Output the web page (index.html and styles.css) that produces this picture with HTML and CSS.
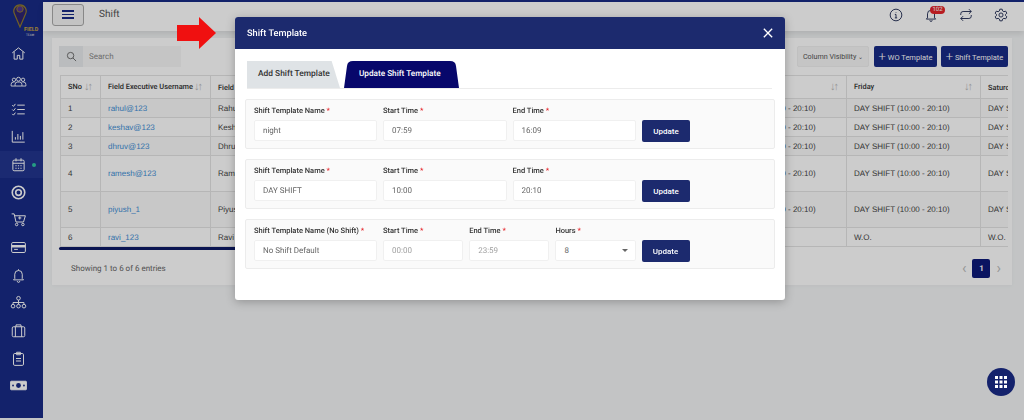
FILE: index.html
```html
<!DOCTYPE html>
<html lang="en">
<head>
    <meta charset="UTF-8">
    <meta name="viewport" content="width=device-width, initial-scale=1.0">
    <title>Shift</title>
    <link rel="stylesheet" href="styles.css">
</head>
<body>
    <div class="app">
        <aside class="sidebar">
            <div class="logo">
                <svg width="14" height="27" viewBox="0 0 14 27"><path d="M7 26 L1.500 13 A6.200 6.200 0 1 1 12.500 13 Z" fill="#2d2370" stroke="#8f7a2e" stroke-width="1.200"/><circle cx="7" cy="8" r="3.200" fill="#54358c" stroke="#8f7a2e"/></svg>
                <div class="logo-name">FIELD</div>
                <div class="logo-sub">TEAM</div>
            </div>
            <nav class="side-nav">
                <a class="side-item"><svg class="side-icon" viewBox="0 0 24 24"><path d="M2 11 12 3l10 8M5 9v12h5v-6h4v6h5V9"/></svg></a>
                <a class="side-item"><svg class="side-icon wide" viewBox="0 0 30 24"><circle cx="15" cy="8" r="3.500"/><circle cx="7" cy="9" r="3"/><circle cx="23" cy="9" r="3"/><path d="M2 20v-3a4 4 0 0 1 4-4h2M28 20v-3a4 4 0 0 0-4-4h-2M9 20v-3a4 4 0 0 1 4-4h4a4 4 0 0 1 4 4v3ZM2 20h7M21 20h7"/></svg></a>
                <a class="side-item"><svg class="side-icon" viewBox="0 0 24 24"><path d="M10 5h12M10 12h12M10 19h12M2 5l2 2 3-4M2 12l2 2 3-4M2 19l2 2 3-4"/></svg></a>
                <a class="side-item"><svg class="side-icon" viewBox="0 0 24 24"><path d="M2 3v18h20M7 17v-4M11 17V8M15 17v-6M19 17V5"/></svg></a>
                <a class="side-item active"><svg class="side-icon" viewBox="0 0 24 24"><rect x="3" y="5" width="18" height="17" rx="2"/><path d="M3 10h18M8 2v5M16 2v5M7 14h2M11 14h2M15 14h2M7 18h2M11 18h2M15 18h2"/></svg><span class="side-dot"></span></a>
                <a class="side-item"><svg class="side-icon" viewBox="0 0 24 24"><circle cx="12" cy="12" r="10" stroke-width="2.600"/><circle cx="12" cy="12" r="4.500" stroke-width="2.600"/></svg></a>
                <a class="side-item"><svg class="side-icon" viewBox="0 0 24 24"><path d="M1 3h4l3 13h12l3-10H6"/><circle cx="9" cy="20" r="2"/><circle cx="19" cy="20" r="2"/><path d="M14 7v5M11.500 9.500h5"/></svg></a>
                <a class="side-item"><svg class="side-icon" viewBox="0 0 24 24"><rect x="1" y="4" width="22" height="16" rx="2"/><path d="M1 10h22" stroke-width="4"/><path d="M5 15h6"/></svg></a>
                <a class="side-item"><svg class="side-icon" viewBox="0 0 24 24"><path d="M6 17V10a6 6 0 0 1 12 0v7l2 2H4ZM10 21a2 2 0 0 0 4 0M12 2v2"/></svg></a>
                <a class="side-item"><svg class="side-icon wide" viewBox="0 0 28 24"><circle cx="14" cy="5" r="3"/><circle cx="14" cy="18" r="3"/><circle cx="5" cy="18" r="3"/><circle cx="23" cy="18" r="3"/><path d="M14 8v7M5 15v-3h18v3"/></svg></a>
                <a class="side-item"><svg class="side-icon" viewBox="0 0 24 24"><rect x="2" y="6" width="20" height="16" rx="2"/><path d="M8 6V3h8v3M7 6v16M17 6v16"/></svg></a>
                <a class="side-item"><svg class="side-icon" viewBox="0 0 24 24"><rect x="4" y="4" width="16" height="19" rx="2"/><path d="M9 2h6v4H9ZM8 12h8M8 16h8"/></svg></a>
                <a class="side-item"><svg class="side-icon wide" viewBox="0 0 28 24"><rect x="1" y="5" width="26" height="14" rx="1" fill="#fff"/><circle cx="14" cy="12" r="4" fill="#182b86" stroke="none"/><circle cx="5" cy="12" r="1.500" fill="#182b86" stroke="none"/><circle cx="23" cy="12" r="1.500" fill="#182b86" stroke="none"/></svg></a>
            </nav>
        </aside>

        <main class="main">
            <header class="topbar">
                <button class="menu-btn"><span></span><span></span><span></span></button>
                <div class="page-title">Shift</div>
                <div class="top-icons">
                    <svg class="top-icon" viewBox="0 0 24 24"><circle cx="12" cy="12" r="10"/><path d="M10 11h2v6M10 17h4M12 7v1"/></svg>
                    <div class="bell-wrap">
                        <svg class="top-icon" viewBox="0 0 24 24"><path d="M6 17V10a6 6 0 0 1 12 0v7l2 2H4ZM10 21a2 2 0 0 0 4 0"/></svg>
                        <span class="badge">102</span>
                    </div>
                    <svg class="top-icon" viewBox="0 0 24 24"><path d="M17 2l4 4-4 4"/><path d="M3 12V10a4 4 0 0 1 4-4h14"/><path d="M7 22l-4-4 4-4"/><path d="M21 12v2a4 4 0 0 1-4 4H3"/></svg>
                    <svg class="top-icon" viewBox="0 0 24 24"><circle cx="12" cy="12" r="3.500"/><path d="M10 2h4l.7 3 2.300 1.300 3-.9 2 3.500-2.200 2.100v2l2.200 2.100-2 3.500-3-.9L14.700 19l-.7 3h-4l-.7-3L7 17.700l-3 .9-2-3.500L4.200 13v-2L2 8.900l2-3.500 3 .9L9.300 5Z"/></svg>
                </div>
            </header>

            <section class="card">
                <div class="toolbar">
                    <div class="search">
                        <span class="search-icon"><svg viewBox="0 0 24 24" width="11" height="11"><circle cx="10" cy="10" r="7"/><path d="M15 15l7 7"/></svg></span>
                        <span class="search-input">Search</span>
                    </div>
                    <div class="tools">
                        <button class="btn-light">Column Visibility <span class="small-caret">&#8964;</span></button>
                        <button class="btn-navy btn-wo"><span class="plus">+</span> WO Template</button>
                        <button class="btn-navy btn-shift"><span class="plus">+</span> Shift Template</button>
                    </div>
                </div>

                <div class="table-wrap">
                    <table class="shift-table">
                        <thead>
                            <tr>
                                <th class="c-sno">SNo <span class="sort">&#8595;&#8593;</span></th>
                                <th class="c-user">Field Executive Username <span class="sort">&#8595;&#8593;</span></th>
                                <th class="c-name">Field Executive Name</th>
                                <th class="c-day">Sunday</th>
                                <th class="c-day">Monday</th>
                                <th class="c-day">Tuesday</th>
                                <th class="c-day">Thursday <span class="sort">&#8595;&#8593;</span></th>
                                <th class="c-day">Friday <span class="sort">&#8595;&#8593;</span></th>
                                <th class="c-day">Saturday</th>
                            </tr>
                        </thead>
                        <tbody>
                            <tr class="row-s"><td>1</td><td><a>rahul@123</a></td><td>Rahul</td><td></td><td></td><td></td><td>DAY SHIFT (10:00 - 20:10)</td><td>DAY SHIFT (10:00 - 20:10)</td><td>DAY SHIFT (10:00 - 20:10)</td></tr>
                            <tr class="row-s"><td>2</td><td><a>keshav@123</a></td><td>Keshav</td><td></td><td></td><td></td><td>DAY SHIFT (10:00 - 20:10)</td><td>DAY SHIFT (10:00 - 20:10)</td><td>DAY SHIFT (10:00 - 20:10)</td></tr>
                            <tr class="row-s"><td>3</td><td><a>dhruv@123</a></td><td>Dhruv</td><td></td><td></td><td></td><td>DAY SHIFT (10:00 - 20:10)</td><td>DAY SHIFT (10:00 - 20:10)</td><td>DAY SHIFT (10:00 - 20:10)</td></tr>
                            <tr class="row-l"><td>4</td><td><a>ramesh@123</a></td><td>Ramesh</td><td></td><td></td><td></td><td>DAY SHIFT (10:00 - 20:10)</td><td>DAY SHIFT (10:00 - 20:10)</td><td>DAY SHIFT (10:00 - 20:10)</td></tr>
                            <tr class="row-l"><td>5</td><td><a>piyush_1</a></td><td>Piyush</td><td></td><td></td><td></td><td>DAY SHIFT (10:00 - 20:10)</td><td>DAY SHIFT (10:00 - 20:10)</td><td>DAY SHIFT (10:00 - 20:10)</td></tr>
                            <tr class="row-s"><td>6</td><td><a>ravi_123</a></td><td>Ravi</td><td></td><td></td><td></td><td></td><td>W.O.</td><td>W.O.</td></tr>
                        </tbody>
                    </table>
                </div>
                <div class="scroll-thumb"></div>

                <div class="table-foot">
                    <div class="entries">Showing 1 to 6 of 6 entries</div>
                    <div class="pager">
                        <span class="pager-arrow">&#8249;</span>
                        <span class="pager-num">1</span>
                        <span class="pager-arrow">&#8250;</span>
                    </div>
                </div>
            </section>
        </main>
    </div>

    <div class="backdrop"></div>

    <svg class="red-arrow" width="40" height="32" viewBox="0 0 40 32"><path d="M0 8h22V0l17 16-17 16v-8H0Z" fill="#f01010"/></svg>

    <div class="modal">
        <div class="modal-head">
            <div class="modal-title">Shift Template</div>
            <svg class="modal-close" width="10" height="10" viewBox="0 0 12 12"><path d="M1 1l10 10M11 1L1 11"/></svg>
        </div>
        <div class="modal-body">
            <div class="tabs">
                <div class="tab tab-add">Add Shift Template</div>
                <div class="tab tab-update">Update Shift Template</div>
            </div>

            <form class="tpl-row">
                <div class="field f-name"><label>Shift Template Name <i>*</i></label><input value="night"></div>
                <div class="field f-time"><label>Start Time <i>*</i></label><input value="07:59"></div>
                <div class="field f-time"><label>End Time <i>*</i></label><input value="16:09"></div>
                <button type="button" class="update-btn">Update</button>
            </form>

            <form class="tpl-row">
                <div class="field f-name"><label>Shift Template Name <i>*</i></label><input value="DAY SHIFT"></div>
                <div class="field f-time"><label>Start Time <i>*</i></label><input value="10:00"></div>
                <div class="field f-time"><label>End Time <i>*</i></label><input value="20:10"></div>
                <button type="button" class="update-btn">Update</button>
            </form>

            <form class="tpl-row">
                <div class="field f-name"><label>Shift Template Name (No Shift) <i>*</i></label><input value="No Shift Default"></div>
                <div class="field f-short"><label>Start Time <i>*</i></label><input class="muted" value="00:00" disabled></div>
                <div class="field f-short"><label>End Time <i>*</i></label><input class="muted" value="23:59" disabled></div>
                <div class="field f-short"><label>Hours <i>*</i></label><div class="fake-select">8<span class="caret"></span></div></div>
                <button type="button" class="update-btn">Update</button>
            </form>
        </div>
    </div>

    <button class="fab">
        <svg width="12" height="12" viewBox="0 0 12 12" fill="#fff"><rect width="3" height="3"/><rect x="4.500" width="3" height="3"/><rect x="9" width="3" height="3"/><rect y="4.500" width="3" height="3"/><rect x="4.500" y="4.500" width="3" height="3"/><rect x="9" y="4.500" width="3" height="3"/><rect y="9" width="3" height="3"/><rect x="4.500" y="9" width="3" height="3"/><rect x="9" y="9" width="3" height="3"/></svg>
    </button>
</body>
</html>
```

FILE: styles.css
```css
* {
    box-sizing: border-box;
}
html, body {
    margin: 0;
    height: 420px;
    overflow: hidden;
}
body {
    font-family: Roboto, "Liberation Sans", sans-serif;
    font-size: 10px;
    color: #333;
    background: #f4f6f7;
    text-rendering: geometricPrecision;
}
button {
    font-family: inherit;
    border: none;
}
.app {
    display: flex;
    height: 420px;
    border-top: 2px solid #182b86;
}

/* sidebar */
.sidebar {
    width: 43px;
    flex-shrink: 0;
    margin: -2px 0 2px;
    background: #182b86;
}
.logo {
    height: 40px;
    padding-top: 1px;
    color: #c9a53a;
    line-height: 1;
}
.logo svg {
    display: block;
    margin-left: 13px;
}
.logo-name {
    margin: 0 0 0 24px;
    font-size: 5.500px;
    font-weight: 700;
}
.logo-sub {
    margin-left: 26px;
    font-size: 3px;
    color: #ddd;
}
.side-nav {
    display: flex;
    flex-direction: column;
}
.side-item {
    position: relative;
    height: 27.670px;
    display: flex;
    align-items: center;
    justify-content: center;
}
.side-item.active {
    background: #22358f;
}
.side-icon {
    width: 15px;
    height: 15px;
    fill: none;
    stroke: #fff;
    stroke-width: 1.600;
    margin-right: 6px;
}
.side-icon.wide {
    width: 17px;
}
.side-dot {
    position: absolute;
    left: 32px;
    top: 12px;
    width: 4px;
    height: 4px;
    border-radius: 50%;
    background: #2fc6a4;
}

/* topbar */
.main {
    flex: 1;
    min-width: 0;
}
.topbar {
    height: 29px;
    display: flex;
    align-items: center;
    padding: 0 16px 4px 9px;
    background: #fff;
    box-shadow: 0 3px 6px rgba(0, 0, 0, .1);
}
.menu-btn {
    width: 32px;
    height: 22px;
    display: flex;
    flex-direction: column;
    justify-content: center;
    gap: 2px;
    padding: 0 9px;
    background: #f4f4f4;
    border: 1px solid #aaa;
    border-radius: 3px;
}
.menu-btn span {
    height: 1.500px;
    background: #182b86;
}
.page-title {
    margin-left: 15px;
    font-size: 10px;
    color: #555;
}
.top-icons {
    margin-left: auto;
    display: flex;
    align-items: center;
    gap: 21px;
}
.top-icon {
    display: block;
    width: 14px;
    height: 14px;
    fill: none;
    stroke: #222d55;
    stroke-width: 1.600;
}
.bell-wrap {
    position: relative;
}
.badge {
    position: absolute;
    left: 6px;
    top: -2px;
    width: 15px;
    height: 8px;
    line-height: 8px;
    text-align: center;
    font-size: 6px;
    color: #fff;
    background: #e5242a;
    border-radius: 4px;
}

/* table card */
.card {
    width: 960px;
    height: 247px;
    margin: 7px 0 0 9px;
    padding: 8px 4px 0 7px;
    background: #fff;
    box-shadow: 0 1px 4px rgba(0, 0, 0, .04);
}
.toolbar {
    display: flex;
    justify-content: space-between;
    align-items: center;
    height: 21px;
    margin-bottom: 8px;
}
.search {
    display: flex;
    width: 122px;
    height: 21px;
    background: #f3f4f6;
    border-radius: 2px;
}
.search-icon {
    width: 24px;
    display: flex;
    align-items: center;
    justify-content: center;
    background: #e9ecee;
}
.search-icon svg {
    fill: none;
    stroke: #666;
    stroke-width: 2;
}
.search-input {
    padding: 6px 6px;
    font-size: 8px;
    color: #8a8a8a;
    background: #f7f7f7;
    flex: 1;
}
.tools {
    display: flex;
    gap: 5px;
}
.btn-light {
    width: 72px;
    height: 21px;
    padding: 0;
    font-size: 7.200px;
    color: #555;
    background: #f7f7f7;
    border: 1px solid #f0f0f0;
    border-radius: 2px;
    white-space: nowrap;
}
.small-caret {
    font-size: 6px;
}
.btn-navy {
    height: 21px;
    padding: 0;
    font-size: 7.500px;
    color: #fff;
    background: #182b86;
    border-radius: 2px;
    white-space: nowrap;
}
.btn-wo {
    width: 63px;
    margin-right: -1px;
}
.btn-shift {
    width: 67px;
}
.plus {
    font-size: 13px;
    font-weight: 300;
    line-height: 1;
    vertical-align: -1px;
}
.table-wrap {
    height: 172px;
    overflow: hidden;
    margin-left: 1px;
}
.shift-table {
    table-layout: fixed;
    width: 1054px;
    border-collapse: collapse;
}
.shift-table th, .shift-table td {
    border: 1px solid #e4e4e4;
    padding: 0 7px;
    text-align: left;
    white-space: nowrap;
    overflow: hidden;
}
.shift-table th {
    height: 23px;
    font-size: 7.400px;
    font-weight: 500;
    color: #333;
    background: #fff;
}
.shift-table td {
    font-family: "Liberation Sans", sans-serif;
    font-size: 8px;
    color: #444;
}
.shift-table td a {
    color: #3f8fd6;
}
.shift-table tbody tr:nth-child(odd) td {
    background: #fbfbfb;
}
.row-s {
    height: 19px;
}
.row-l {
    height: 36px;
}
.c-sno {
    width: 40px;
}
.c-user {
    width: 110px;
}
.c-name {
    width: 100px;
}
.c-day {
    width: 134px;
}
.sort {
    float: right;
    font-size: 11px;
    line-height: 10px;
    color: #bdbdbd;
    letter-spacing: -2px;
    margin-right: 2px;
}
.scroll-thumb {
    width: 480px;
    height: 3px;
    background: #0d1a66;
    border-radius: 2px;
}
.table-foot {
    display: flex;
    justify-content: space-between;
    align-items: center;
    padding: 9px 7px 0 12px;
}
.entries {
    font-size: 8px;
    color: #666;
}
.pager {
    display: flex;
    align-items: center;
    gap: 6px;
}
.pager-arrow {
    font-size: 15px;
    color: #bbb;
    line-height: 1;
}
.pager-num {
    width: 18px;
    height: 19px;
    line-height: 19px;
    text-align: center;
    font-size: 8px;
    font-weight: 700;
    color: #fff;
    background: #0d1a7a;
    border-radius: 2px;
}

/* modal layer */
.backdrop {
    position: fixed;
    inset: 0;
    background: rgba(0, 0, 0, .2);
}
.red-arrow {
    position: absolute;
    left: 177px;
    top: 17px;
}
.modal {
    position: absolute;
    left: 235px;
    top: 17px;
    width: 550px;
    height: 283px;
    background: #fff;
    border-radius: 3px;
    box-shadow: 0 2px 10px rgba(0, 0, 0, .25);
    overflow: hidden;
}
.modal-head {
    height: 32px;
    padding: 0 12px;
    display: flex;
    justify-content: space-between;
    align-items: center;
    background: #1c2a6e;
    color: #fff;
}
.modal-title {
    font-size: 9.200px;
    font-weight: 500;
}
.modal-close {
    fill: none;
    stroke: #fff;
    stroke-width: 1.600;
}
.modal-body {
    padding: 12px 10px 0;
}
.tabs {
    display: flex;
    gap: 4px;
    height: 28px;
    margin: 0 3px 10px 2px;
    border-bottom: 1px solid #ececec;
}
.tab {
    height: 27px;
    line-height: 26px;
    font-weight: 500;
}
.tab-add {
    width: 93px;
    padding-left: 11px;
    font-size: 8.400px;
    color: #333;
    background: #dfe3e6;
    clip-path: polygon(0 0, 91% 0, 100% 100%, 0 100%);
}
.tab-update {
    width: 115px;
    padding-left: 15px;
    font-size: 8.200px;
    color: #fff;
    background: #07076b;
    clip-path: path('M0 27 L3 5 Q3.500 0 9 0 L106 0 Q111.500 0 112 5 L115 27 Z');
}
.tpl-row {
    display: flex;
    align-items: flex-end;
    gap: 6px;
    height: 50px;
    margin-bottom: 10px;
    padding: 0 8px 6px 8px;
    background: #fafafa;
    border: 1px solid #ececec;
    border-radius: 2px;
}
.field {
    margin-bottom: 1px;
}
.field label {
    display: block;
    margin-bottom: 5px;
    font-size: 7.500px;
    font-weight: 500;
    color: #333;
    white-space: nowrap;
}
.field i {
    font-style: normal;
    color: #e5242a;
}
.f-name {
    width: 123px;
}
.f-time {
    width: 123.500px;
}
.f-short {
    width: 80.200px;
}
.field input, .fake-select {
    display: block;
    width: 100%;
    height: 21px;
    padding: 0 8px;
    font-family: inherit;
    font-size: 8px;
    line-height: 19px;
    color: #666;
    background: #fff;
    border: 1px solid #f0f0f0;
    border-radius: 2px;
    text-rendering: geometricPrecision;
}
.field input.muted {
    color: #a0a0a0;
}
.fake-select {
    position: relative;
}
.caret {
    position: absolute;
    right: 7px;
    top: 8px;
    border: 3px solid transparent;
    border-top-color: #666;
}
.update-btn {
    width: 48px;
    height: 22px;
    font-size: 8px;
    font-weight: 500;
    color: #fff;
    background: #1c2a6e;
    border-radius: 2px;
}
.fab {
    position: absolute;
    left: 987px;
    top: 368px;
    width: 28px;
    height: 28px;
    padding: 0;
    display: flex;
    align-items: center;
    justify-content: center;
    background: #14226c;
    border-radius: 50%;
}
```
